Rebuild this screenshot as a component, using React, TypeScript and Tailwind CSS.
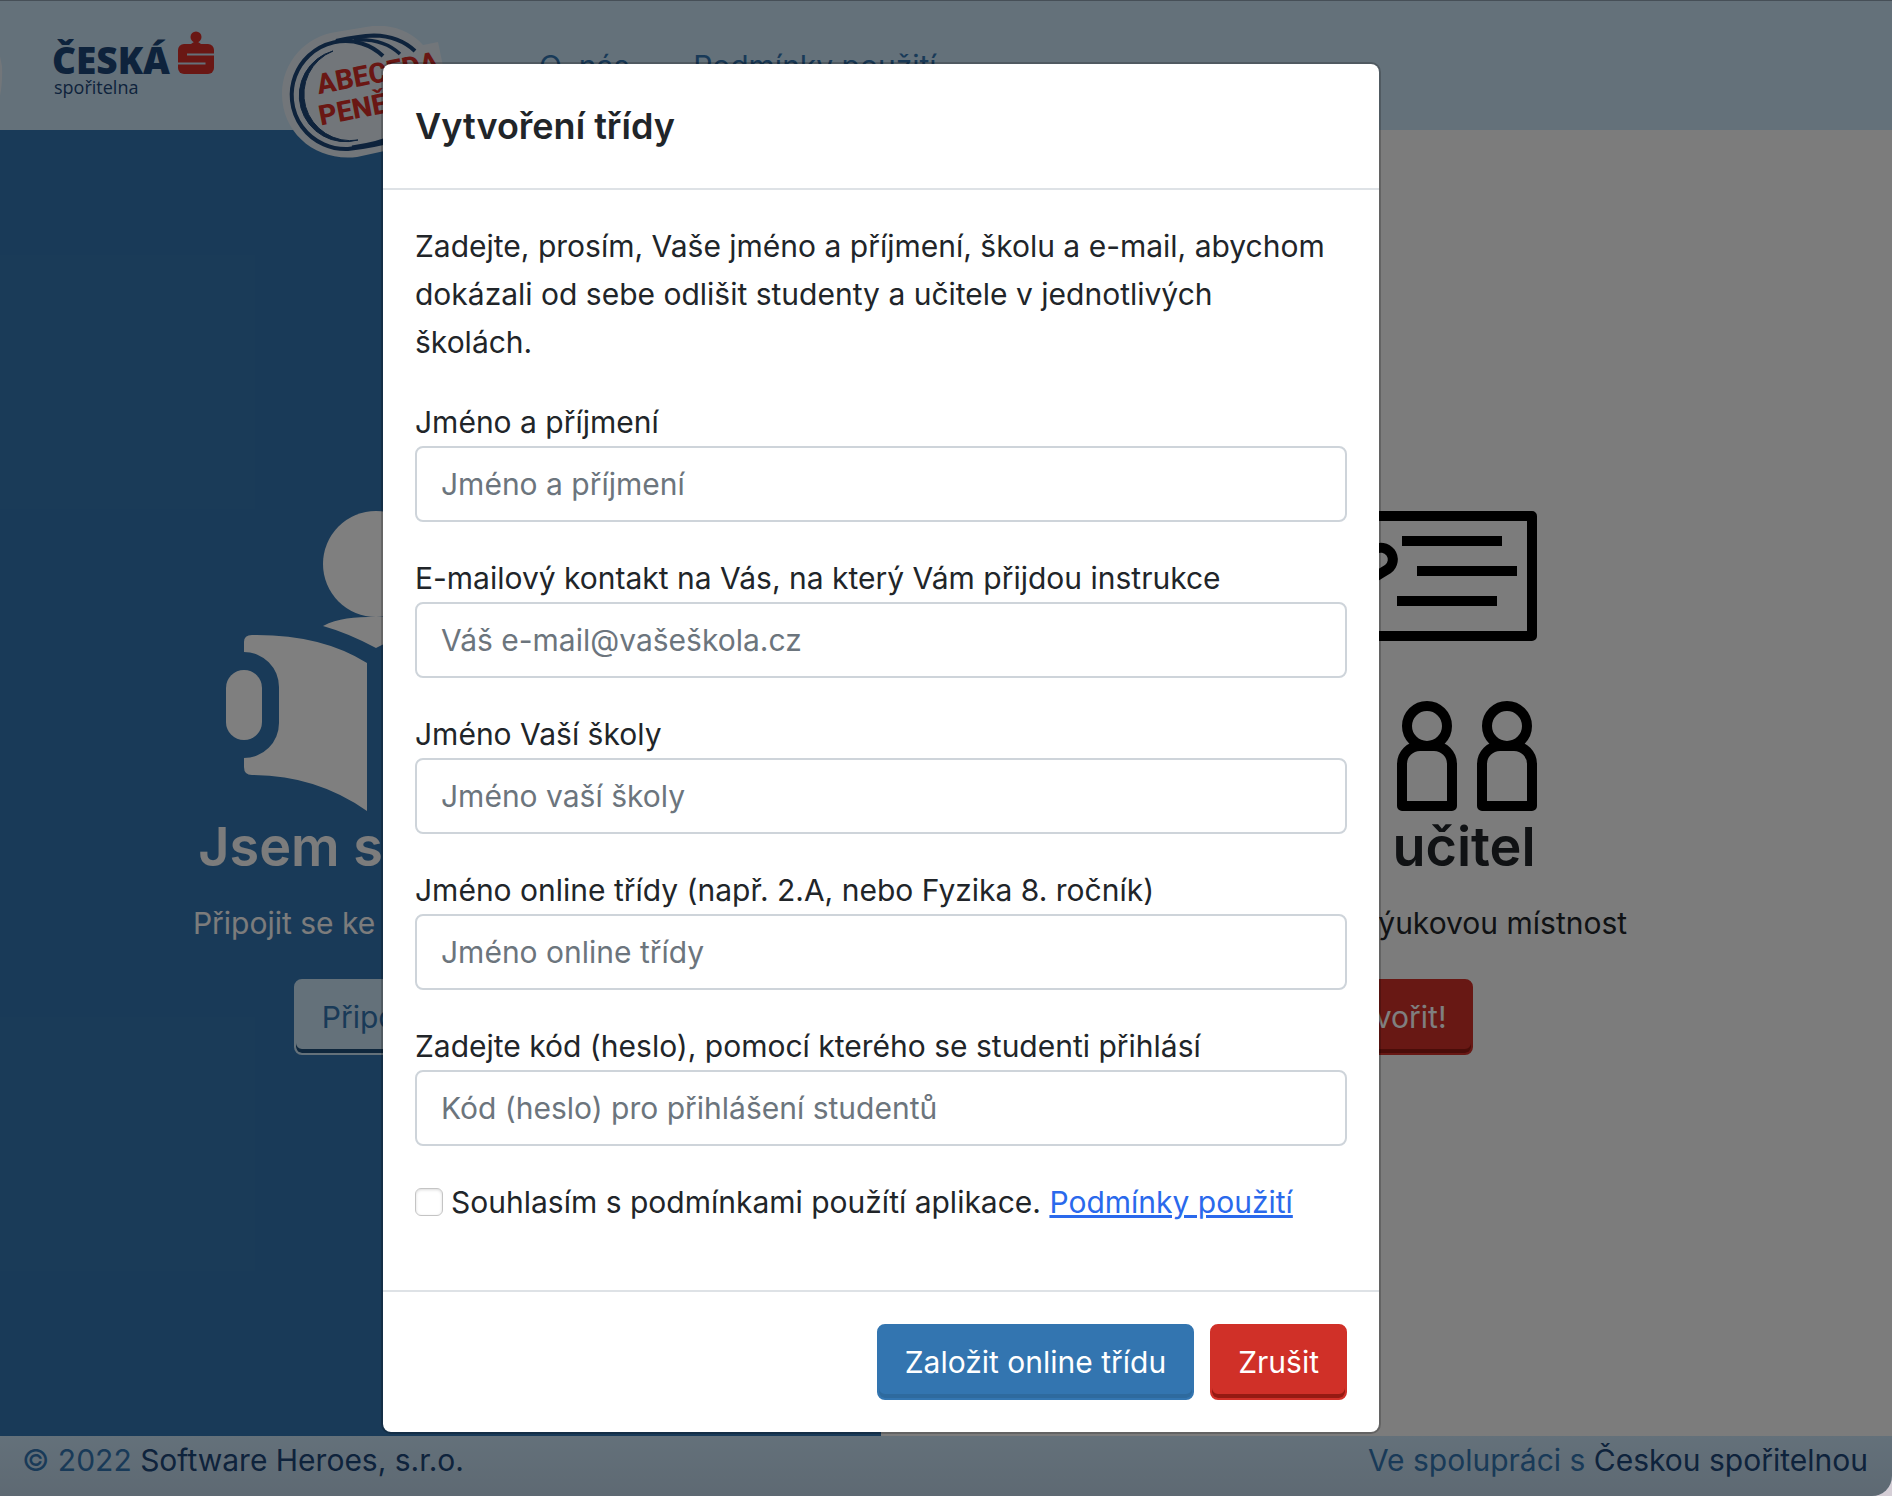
import React, { useState } from 'react';

const fields = [
  { id: 'name', type: 'text', label: 'Jméno a příjmení', placeholder: 'Jméno a příjmení' },
  { id: 'email', type: 'email', label: 'E-mailový kontakt na Vás, na který Vám přijdou instrukce', placeholder: 'Váš e-mail@vašeškola.cz' },
  { id: 'school', type: 'text', label: 'Jméno Vaší školy', placeholder: 'Jméno vaší školy' },
  { id: 'room', type: 'text', label: 'Jméno online třídy (např. 2.A, nebo Fyzika 8. ročník)', placeholder: 'Jméno online třídy' },
  { id: 'code', type: 'text', label: 'Zadejte kód (heslo), pomocí kterého se studenti přihlásí', placeholder: 'Kód (heslo) pro přihlášení studentů' },
];

function BankLogo() {
  return (
    <svg viewBox="0 0 162 68" className="w-[162px] h-[68px] shrink-0 overflow-visible">
      <g fontFamily="'Open Sans', sans-serif" fill="#1c4678">
        <text x="-2" y="42" fontSize="37" fontWeight="800">ČESKÁ</text>
        <text x="0" y="62" fontSize="18">spořitelna</text>
      </g>
      <circle cx="142" cy="5" r="5.500" fill="#d42f28" />
      <path d="M137 12Q142 7 147 12Z" fill="#d42f28" />
      <rect x="124" y="12" width="36" height="30" rx="6" fill="#d42f28" />
      <path d="M160 22.500H133M124 31.500H151.500" stroke="#c8e2f5" strokeWidth="2" fill="none" />
    </svg>
  );
}

function AbecedaLogo({ withText = true }: { withText?: boolean }) {
  return (
    <svg viewBox="0 0 162 134" className="w-[162px] h-[134px] shrink-0">
      <path d="M54 6L84 1C108 -4 130 6 141 19L156 16L161 40C163 85 145 116 107 124L75 131C35 136 0 108 0 68C0 36 24 10 54 6Z" fill="#e4edf5" />
      <g fill="none" stroke="#1c4678">
        <path d="M101 30A54 54 0 1 0 66 123Q92 120 112 114" strokeWidth="4" />
        <path d="M54 15Q76 10 92 9.500Q117 10 133 25" strokeWidth="4" />
        <path d="M72 14Q101 12 118 28" strokeWidth="3.500" />
        <path d="M70 121Q95 118 118 108" strokeWidth="3" />
      </g>
      <path d="M51 25A46.500 46.500 0 0 0 76 114A46.200 46.200 0 0 1 51 25Z" fill="#1c4678" stroke="#1c4678" />
      {withText && (
        <g transform="rotate(-11 38 69)" fontFamily="Roboto, sans-serif" fontWeight="800" fontSize="28" fill="#d42f28">
          <text x="37" y="68">ABECEDA</text>
          <text x="33" y="99">PENĚZ</text>
        </g>
      )}
    </svg>
  );
}

function ReaderIcon() {
  return (
    <svg viewBox="0 0 300 300" className="w-[300px] h-[300px]" fill="#ffffff">
      <circle cx="150" cy="53" r="53" />
      <path d="M97 115C112 107 128 106 150 106S188 107 203 115Q178 122 150 137Q122 122 97 115Z" />
      <rect y="159" width="36" height="70" rx="18" />
      <rect x="264" y="159" width="36" height="70" rx="18" />
      <path d="M18 141V131Q18 124 26 124Q95 123 141 152V300Q90 264 26 264Q18 264 18 256V247A35 35 0 0 0 53 212V176A35 35 0 0 0 18 141Z" />
      <path d="M282 141V131Q282 124 274 124Q205 123 159 152V300Q210 264 274 264Q282 264 282 256V247A35 35 0 0 1 247 212V176A35 35 0 0 1 282 141Z" />
    </svg>
  );
}

function ClassroomIcon() {
  return (
    <svg viewBox="0 0 300 300" className="w-[300px] h-[300px]" fill="none" stroke="#000000" strokeWidth="10" strokeLinejoin="round">
      <path d="M85 5H295V125H85" />
      <path d="M165 30H265M180 60H280M160 90H260" />
      <path d="M100 70L137 39A11 11 0 1 1 151 58L115 80V160" />
      <circle cx="60" cy="40" r="25" />
      {[30, 110, 190, 270].map((x) => (
        <g key={x} transform={`translate(${x} 0)`}>
          <circle cy="215" r="20" />
          <path d="M-25 295V253A18 18 0 0 1 -7 235H7A18 18 0 0 1 25 253V295Z" />
        </g>
      ))}
    </svg>
  );
}

export default function App() {
  const [agreed, setAgreed] = useState(false);

  return (
    <div className="overflow-hidden bg-[#d5ced6] font-['Inter',sans-serif] text-[30px] leading-[48px] text-[#212529]">
      <div className="relative -ml-[130px] min-h-screen flex flex-col rounded-br-[20px] overflow-hidden">
        <header className="relative z-10 h-[130px] flex items-start bg-[#c8e2f5] border-t border-[#8c9eae]">
          <div className="w-[133px] mt-[25px] flex justify-end shrink-0">
            <AbecedaLogo withText={false} />
          </div>
          <div className="ml-[51px] mt-[31px]">
            <BankLogo />
          </div>
          <div className="ml-[66px] mt-[25px]">
            <AbecedaLogo />
          </div>
          <nav className="ml-[95px] self-stretch flex items-center gap-16 whitespace-nowrap text-[#3375b0]">
            <a href="#o-nas">O&nbsp; nás</a>
            <a href="#podminky">Podmínky použití</a>
          </nav>
        </header>

        <main className="flex-1 grid grid-cols-2">
          <section className="flex flex-col items-center justify-center bg-[#3375b0] text-[#f8f8f8]">
            <ReaderIcon />
            <h2 className="text-[54px] leading-[72px] font-semibold mb-4">Jsem student</h2>
            <p className="mb-8">Připojit se ke studijní třídě</p>
            <button type="button" className="h-[76px] px-[26px] rounded-lg border-2 border-[#c8e2f5] bg-[#c8e2f5] text-[#3375b0] shadow-[inset_0_-4px_0_#1f4f7a]">Připojit!</button>
          </section>
          <section className="flex flex-col items-center justify-center bg-[#f8f8f8]">
            <ClassroomIcon />
            <h2 className="text-[54px] leading-[72px] font-semibold mb-4">Jsem učitel</h2>
            <p className="mb-8">Vytvořit novou výukovou místnost</p>
            <button type="button" className="h-[76px] px-6 rounded-lg border-2 border-[#d03028] bg-[#d03028] text-white shadow-[inset_0_-4px_0_#951a12]">Vytvořit!</button>
          </section>
        </main>

        <footer className="flex justify-between pl-[152px] pr-6 pb-3 bg-linear-to-b from-[#c8e2f5] to-[#bcd3e6] text-[#3375b0]">
          <span>© 2022 <a href="#heroes" className="text-[#1c4678]">Software Heroes, s.r.o.</a></span>
          <span>Ve spolupráci s <a href="#csas" className="text-[#1c4678]">Českou spořitelnou</a></span>
        </footer>

        <div className="absolute inset-0 z-20 bg-black/50">
          <form
            role="dialog"
            aria-labelledby="dialog-title"
            onSubmit={(e) => e.preventDefault()}
            className="mx-auto mt-[62px] w-full max-w-[1000px] bg-white bg-clip-padding border-2 border-black/20 rounded-[10px]"
          >
            <div className="p-8 border-b-2 border-[#dee2e6]">
              <h5 id="dialog-title" className="text-[36px] leading-[60px] font-semibold">Vytvoření třídy</h5>
            </div>

            <div className="p-8">
              <p className="mb-8 pr-4">
                Zadejte, prosím, Vaše jméno a příjmení, školu a e-mail, abychom dokázali od sebe odlišit studenty a učitele v jednotlivých školách.
              </p>

              {fields.map((field) => (
                <div key={field.id} className="mb-8">
                  <label htmlFor={field.id} className="block">{field.label}</label>
                  <input
                    id={field.id}
                    type={field.type}
                    placeholder={field.placeholder}
                    className="block w-full h-[76px] px-6 rounded-lg border-2 border-[#ced4da] bg-white placeholder:text-[#6c757d] outline-none focus:border-[#86b7fe]"
                  />
                </div>
              ))}

              <div className="mb-8 flex items-center gap-2">
                <input
                  id="agree"
                  type="checkbox"
                  checked={agreed}
                  onChange={(e) => setAgreed(e.target.checked)}
                  className="appearance-none w-7 h-7 shrink-0 rounded-md border border-[#c4c4c4] bg-white checked:bg-[#3375b0] shadow-[inset_0_1px_3px_rgba(0,0,0,0.15)]"
                />
                <span>
                  <label htmlFor="agree">Souhlasím s podmínkami použítí aplikace.</label>{' '}
                  <a href="#podminky" className="text-[#2a69ec] underline">Podmínky použití</a>
                </span>
              </div>
            </div>

            <div className="p-8 flex justify-end gap-4 border-t-2 border-[#dee2e6]">
              <button type="submit" className="h-[76px] px-[26px] rounded-lg border-2 border-[#3375b0] bg-[#3375b0] text-white shadow-[inset_0_-4px_0_#2e6a9e]">Založit online třídu</button>
              <button type="button" className="h-[76px] px-[26px] rounded-lg border-2 border-[#d03028] bg-[#d03028] text-white shadow-[inset_0_-4px_0_#951a12]">Zrušit</button>
            </div>
          </form>
        </div>
      </div>
    </div>
  );
}
